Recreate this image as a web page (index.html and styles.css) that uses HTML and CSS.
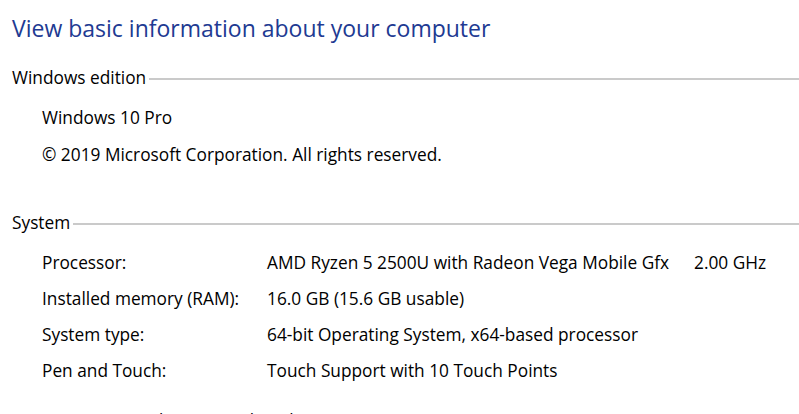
FILE: index.html
```html
<!DOCTYPE html>
<html lang="en">
<head>
<meta charset="utf-8">
<title>System</title>
<link rel="stylesheet" href="styles.css">
</head>
<body>
<main class="page">
  <h1 class="title">View basic information about your computer</h1>

  <section class="group">
    <h2 class="group-head">Windows edition</h2>
    <div class="lines">
      <p class="line">Windows 10 Pro</p>
      <p class="line">© 2019 Microsoft Corporation. All rights reserved.</p>
    </div>
  </section>

  <section class="group group-system">
    <h2 class="group-head">System</h2>
    <dl class="props">
      <dt class="prop-name">Processor:</dt>
      <dd class="prop-value">AMD Ryzen 5 2500U with Radeon Vega Mobile Gfx<span class="speed">2.00 GHz</span></dd>
      <dt class="prop-name">Installed memory (RAM):</dt>
      <dd class="prop-value">16.0 GB (15.6 GB usable)</dd>
      <dt class="prop-name">System type:</dt>
      <dd class="prop-value">64-bit Operating System, x64-based processor</dd>
      <dt class="prop-name">Pen and Touch:</dt>
      <dd class="prop-value">Touch Support with 10 Touch Points</dd>
    </dl>
  </section>

  <section class="group group-computer">
    <h2 class="group-head">Computer name, domain, and workgroup settings</h2>
  </section>
</main>
</body>
</html>
```

FILE: styles.css
```css
html, body {
  margin: 0;
  padding: 0;
  background: #ffffff;
  overflow: hidden;
}

body {
  width: 799px;
  height: 414px;
  font-family: "Open Sans", "Noto Sans", "DejaVu Sans", sans-serif;
  font-size: 17.3px;
  color: #000000;
}

.page {
  padding: 12px 0 0 12px;
}

.title {
  margin: 0;
  font-size: 23px;
  font-weight: 400;
  line-height: 32px;
  color: #213a92;
}

.group {
  margin-top: 16px;
}

.group-system {
  margin-top: 32px;
}

.group-computer {
  margin-top: 14px;
}

.group-head {
  display: flex;
  align-items: center;
  margin: 0;
  font-size: 17.3px;
  font-weight: 400;
  line-height: 36px;
}

.group-head::after {
  content: "";
  flex: 1;
  height: 2px;
  margin: 2px 0 0 3px;
  background: #cacaca;
}

.lines {
  margin-top: 4px;
  padding-left: 30px;
}

.line {
  margin: 0;
  line-height: 36px;
}

.line + .line {
  margin-top: 1px;
}

.props {
  display: grid;
  grid-template-columns: 225px 1fr;
  margin: 4px 0 0;
  padding-left: 30px;
}

.prop-name,
.prop-value {
  margin: 0;
  line-height: 36px;
  white-space: nowrap;
}

.speed {
  margin-left: 25px;
}
```
